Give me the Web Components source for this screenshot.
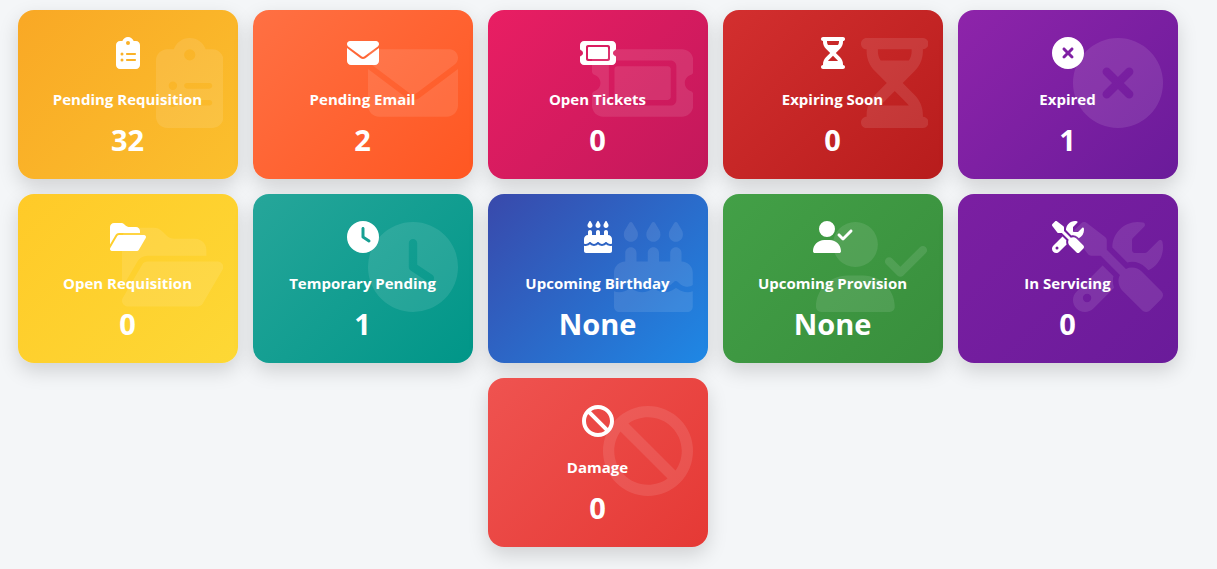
<!DOCTYPE html>
<html lang="en">
<head>
<meta charset="utf-8">
<meta name="viewport" content="width=device-width, initial-scale=1">
<title>Dashboard</title>
<style>
  body {
    margin: 0;
    background: #f4f6f8;
    font-family: "Segoe UI", "Open Sans", "Noto Sans", sans-serif;
  }
</style>
</head>
<body>
<stat-board>
  <stat-card icon="clipboard" from="#f9a825" to="#fbc02d"><span slot="label">Pending Requisition</span>32</stat-card>
  <stat-card icon="envelope" from="#ff7043" to="#ff5722"><span slot="label">Pending Email</span>2</stat-card>
  <stat-card icon="ticket" from="#e91e63" to="#c2185b"><span slot="label">Open Tickets</span>0</stat-card>
  <stat-card icon="hourglass" from="#d32f2f" to="#b71c1c"><span slot="label">Expiring Soon</span>0</stat-card>
  <stat-card icon="xmark" from="#8e24aa" to="#6a1b9a"><span slot="label">Expired</span>1</stat-card>
  <stat-card icon="folder" from="#ffca28" to="#fdd835"><span slot="label">Open Requisition</span>0</stat-card>
  <stat-card icon="clock" from="#26a69a" to="#009688"><span slot="label">Temporary Pending</span>1</stat-card>
  <stat-card icon="cake" from="#3949ab" to="#1e88e5"><span slot="label">Upcoming Birthday</span>None</stat-card>
  <stat-card icon="usercheck" from="#43a047" to="#388e3c"><span slot="label">Upcoming Provision</span>None</stat-card>
  <stat-card icon="tools" from="#7b1fa2" to="#6a1b9a"><span slot="label">In Servicing</span>0</stat-card>
  <stat-card icon="ban" from="#ef5350" to="#e53935"><span slot="label">Damage</span>0</stat-card>
</stat-board>

<script>
// Each glyph: [viewBox width, path]; all are 512 units high.
const GLYPHS = {
  clipboard: [384, "M192 0c-41.8 0-77.4 26.7-90.5 64H64C28.7 64 0 92.7 0 128V448c0 35.3 28.7 64 64 64H320c35.3 0 64-28.7 64-64V128c0-35.3-28.7-64-64-64H282.5C269.4 26.7 233.8 0 192 0zm0 64a32 32 0 1 1 0 64 32 32 0 1 1 0-64zM72 272a24 24 0 1 1 48 0 24 24 0 1 1 -48 0zm104-16H304c8.8 0 16 7.2 16 16s-7.2 16-16 16H176c-8.8 0-16-7.2-16-16s7.2-16 16-16zM72 368a24 24 0 1 1 48 0 24 24 0 1 1 -48 0zm88 0c0-8.8 7.2-16 16-16H304c8.8 0 16 7.2 16 16s-7.2 16-16 16H176c-8.8 0-16-7.2-16-16z"],
  envelope: [512, "M48 64C21.5 64 0 85.5 0 112c0 15.1 7.1 29.3 19.2 38.4L236.8 313.6c11.4 8.5 27 8.5 38.4 0L492.8 150.4c12.1-9.1 19.2-23.3 19.2-38.4c0-26.5-21.5-48-48-48H48zM0 176V384c0 35.3 28.7 64 64 64H448c35.3 0 64-28.7 64-64V176L294.4 339.2c-22.8 17.1-54 17.1-76.8 0L0 176z"],
  ticket: [576, "M64 64C28.7 64 0 92.7 0 128v64c0 8.8 7.4 15.7 15.7 18.6C34.5 217.1 48 235 48 256s-13.5 38.9-32.3 45.4C7.4 304.3 0 311.2 0 320v64c0 35.3 28.7 64 64 64H512c35.3 0 64-28.7 64-64V320c0-8.8-7.4-15.7-15.7-18.6C541.5 294.9 528 277 528 256s13.5-38.9 32.3-45.4c8.3-2.9 15.7-9.8 15.7-18.6V128c0-35.3-28.7-64-64-64H64zm64 112l0 160c0 8.8 7.2 16 16 16H432c8.8 0 16-7.2 16-16V176c0-8.8-7.2-16-16-16H144c-8.8 0-16 7.2-16 16zM96 160c0-17.7 14.3-32 32-32H448c17.7 0 32 14.3 32 32V352c0 17.7-14.3 32-32 32H128c-17.7 0-32-14.3-32-32V160z"],
  hourglass: [384, "M32 0C14.3 0 0 14.3 0 32S14.3 64 32 64V75c0 42.4 16.9 83.1 46.9 113.1L146.7 256 78.9 323.9C48.9 353.9 32 394.6 32 437v11c-17.7 0-32 14.3-32 32s14.3 32 32 32H352c17.7 0 32-14.3 32-32s-14.3-32-32-32V437c0-42.4-16.9-83.1-46.9-113.1L237.3 256l67.9-67.9c30-30 46.9-70.7 46.9-113.1V64c17.7 0 32-14.3 32-32s-14.3-32-32-32H32zM96 75V64H288V75c0 19-5.6 37.4-16 53H112c-10.3-15.6-16-34-16-53zm16 309c3.5-5.3 7.6-10.3 12.1-14.9L192 301.3l67.9 67.9c4.6 4.6 8.6 9.6 12.1 14.9H112z"],
  xmark: [512, "M256 512A256 256 0 1 0 256 0a256 256 0 1 0 0 512zM175 175c9.4-9.4 24.6-9.4 33.9 0l47 47 47-47c9.4-9.4 24.6-9.4 33.9 0s9.4 24.6 0 33.9l-47 47 47 47c9.4 9.4 9.4 24.6 0 33.9s-24.6 9.4-33.9 0l-47-47-47 47c-9.4 9.4-24.6 9.4-33.9 0s-9.4-24.6 0-33.9l47-47-47-47c-9.4-9.4-9.4-24.6 0-33.9z"],
  folder: [576, "M88.7 223.8L0 375.8V96C0 60.7 28.7 32 64 32H181.5c17 0 33.3 6.7 45.3 18.7l26.5 26.5c12 12 28.3 18.7 45.3 18.7H416c35.3 0 64 28.7 64 64v32H144c-22.8 0-43.8 12.1-55.3 31.8zm27.6 16.1C122.1 230 132.6 224 144 224H544c11.5 0 22 6.1 27.7 16.1s5.7 22.2-.1 32.1l-112 192C453.9 474 443.4 480 432 480H32c-11.5 0-22-6.1-27.7-16.1s-5.7-22.2 .1-32.1l112-192z"],
  clock: [512, "M256 0a256 256 0 1 1 0 512A256 256 0 1 1 256 0zM232 120V256c0 8 4 15.5 10.7 20l96 64c11 7.4 25.9 4.4 33.3-6.7s4.4-25.9-6.7-33.3L280 243.2V120c0-13.3-10.7-24-24-24s-24 10.7-24 24z"],
  cake: [448, "M86.4 5.5L61.8 47.6C58 54.1 56 61.6 56 69.2V72c0 22.1 17.9 40 40 40s40-17.9 40-40V69.2c0-7.6-2-15-5.8-21.6L105.6 5.5C103.6 2.1 100 0 96 0s-7.6 2.1-9.6 5.5zm128 0L189.8 47.6c-3.8 6.5-5.8 14-5.8 21.6V72c0 22.1 17.9 40 40 40s40-17.9 40-40V69.2c0-7.6-2-15-5.8-21.6L233.6 5.5C231.6 2.1 228 0 224 0s-7.6 2.1-9.6 5.5zM317.8 47.6c-3.8 6.5-5.8 14-5.8 21.6V72c0 22.1 17.9 40 40 40s40-17.9 40-40V69.2c0-7.6-2-15-5.8-21.6L361.6 5.5C359.6 2.1 356 0 352 0s-7.6 2.1-9.6 5.5L317.8 47.6zM128 176c0-17.7-14.3-32-32-32s-32 14.3-32 32v48c-35.3 0-64 28.7-64 64v71c8.3 5.2 18.1 9 28.8 9C56 368 76 349 84.7 341c3.1-3.2 7.4-4.9 11.9-4.8s8.6 2.1 11.6 5.4C116 350 136 368 160 368s44-18 52-26.6c3-3.5 7.4-5.4 12-5.4s9 2 12 5.4C244 350 264 368 288 368s44-18 52-26.6c2.9-3.4 7.1-5.3 11.6-5.4s8.7 1.6 11.9 4.8C371 349 392 368 419.2 368c10.7 0 20.5-3.8 28.8-9V288c0-35.3-28.7-64-64-64V176c0-17.7-14.3-32-32-32s-32 14.3-32 32v48H256V176c0-17.7-14.3-32-32-32s-32 14.3-32 32v48H128V176zM448 394.6c-8.5 3.3-18.2 5.4-28.8 5.4-22.5 0-42.4-9.9-55.8-18.6-4.1-2.7-7.8-5.4-10.9-7.8-2.8 2.4-6.1 5-9.8 7.5C329.8 390 310.6 400 288 400s-41.8-10-54.6-18.9c-3.5-2.4-6.7-4.9-9.4-7.2-2.7 2.3-5.9 4.7-9.4 7.2C201.8 390 182.6 400 160 400s-41.8-10-54.6-18.9c-3.7-2.6-7-5.2-9.8-7.5-3.1 2.4-6.8 5.1-10.9 7.8C71.2 390.1 51.3 400 28.8 400c-10.6 0-20.3-2.2-28.8-5.4V480c0 17.7 14.3 32 32 32H416c17.7 0 32-14.3 32-32V394.6z"],
  usercheck: [640, "M96 128a128 128 0 1 1 256 0A128 128 0 1 1 96 128zM0 482.3C0 383.8 79.8 304 178.3 304h91.4C368.2 304 448 383.8 448 482.3c0 16.4-13.3 29.7-29.7 29.7H29.7C13.3 512 0 498.7 0 482.3zM625 177L497 305c-9.4 9.4-24.6 9.4-33.9 0l-64-64c-9.4-9.4-9.4-24.6 0-33.9s24.6-9.4 33.9 0l47 47L591 143c9.4-9.4 24.6-9.4 33.9 0s9.4 24.6 0 33.9z"],
  tools: [512, "M78.6 5C69.1-2.4 55.6-1.5 47 7L7 47c-8.5 8.5-9.4 22-2.1 31.6l80 104c4.5 5.9 11.6 9.4 19 9.4h54.1l109 109c-14.7 29-10 65.4 14.3 89.6l112 112c12.5 12.5 32.8 12.5 45.3 0l64-64c12.5-12.5 12.5-32.8 0-45.3l-112-112c-24.2-24.2-60.6-29-89.6-14.3l-109-109V104c0-7.5-3.5-14.5-9.4-19L78.6 5zM19.9 396.1C7.2 408.8 0 426.1 0 444.1C0 481.6 30.4 512 67.9 512c18 0 35.3-7.2 48-19.9L233.7 374.3c-7.8-20.9-9-43.6-3.6-65.1l-61.7-61.7L19.9 396.1zM512 144c0-10.5-1.1-20.7-3.2-30.5c-2.4-11.2-16.1-14.1-24.2-6l-63.9 63.9c-3 3-7.1 4.7-11.3 4.7H352c-8.8 0-16-7.2-16-16V102.6c0-4.2 1.7-8.3 4.7-11.3l63.9-63.9c8.1-8.1 5.2-21.8-6-24.2C388.7 1.1 378.5 0 368 0C288.5 0 224 64.5 224 144l0 .8 85.3 85.3c36-9.1 75.8 .5 104 28.7L429 274.5c49-23 83-72.8 83-130.5zM56 432a24 24 0 1 1 48 0 24 24 0 1 1 -48 0z"],
  ban: [512, "M367.2 412.5L99.5 144.8C77.1 176.1 64 214.5 64 256c0 106 86 192 192 192c41.5 0 79.9-13.1 111.2-35.5zm45.3-45.3C434.9 335.9 448 297.5 448 256c0-106-86-192-192-192c-41.5 0-79.9 13.1-111.2 35.5L412.5 367.2zM0 256a256 256 0 1 1 512 0A256 256 0 1 1 0 256z"]
};

class GlyphIcon extends HTMLElement {
  connectedCallback() {
    if (this.shadowRoot) return;
    const [width, path] = GLYPHS[this.getAttribute("name")];
    this.attachShadow({ mode: "open" }).innerHTML = `
      <style>
        :host { display: block; height: 32px; }
        svg { display: block; height: 100%; fill: currentColor; }
      </style>
      <svg viewBox="0 0 ${width} 512" aria-hidden="true"><path fill-rule="evenodd" d="${path}"/></svg>`;
  }
}
customElements.define("glyph-icon", GlyphIcon);

class StatCard extends HTMLElement {
  connectedCallback() {
    if (this.shadowRoot) return;
    const icon = this.getAttribute("icon");
    this.style.setProperty("--from", this.getAttribute("from"));
    this.style.setProperty("--to", this.getAttribute("to"));
    this.attachShadow({ mode: "open" }).innerHTML = `
      <style>
        :host {
          display: block;
          box-sizing: border-box;
          flex: 0 0 220px;
          position: relative;
          padding: 27px 21px 21px 20px;
          border-radius: 16px;
          color: #fff;
          background: linear-gradient(135deg, var(--from), var(--to));
          box-shadow: 0 8px 20px rgba(0, 0, 0, 0.15);
        }
        article { display: flex; flex-direction: column; align-items: center; text-align: center; }
        h2 { margin: 19px 0 12px; font-size: 15px; line-height: 22px; font-weight: 700; white-space: nowrap; }
        p { margin: 0; font-size: 29px; line-height: 36px; font-weight: 700; }
        .watermark { position: absolute; top: 28px; right: 15px; height: 90px; opacity: 0.1; }
      </style>
      <article>
        <glyph-icon class="watermark" name="${icon}"></glyph-icon>
        <glyph-icon name="${icon}"></glyph-icon>
        <h2><slot name="label"></slot></h2>
        <p><slot></slot></p>
      </article>`;
  }
}
customElements.define("stat-card", StatCard);

class StatBoard extends HTMLElement {
  connectedCallback() {
    if (this.shadowRoot) return;
    this.attachShadow({ mode: "open" }).innerHTML = `
      <style>
        :host { display: block; padding: 10px 31px 22px 10px; }
        main { display: flex; flex-wrap: wrap; justify-content: center; gap: 15px; }
      </style>
      <main><slot></slot></main>`;
  }
}
customElements.define("stat-board", StatBoard);
</script>
</body>
</html>
